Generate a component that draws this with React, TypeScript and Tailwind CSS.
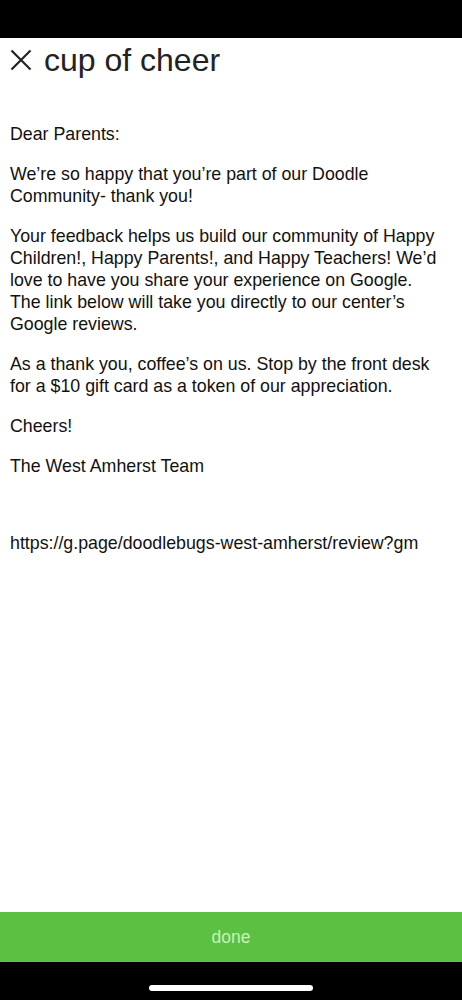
import React from "react";

const paragraphs = [
  "Dear Parents:",
  "We’re so happy that you’re part of our Doodle Community- thank you!",
  "Your feedback helps us build our community of Happy Children!, Happy Parents!, and Happy Teachers! We’d love to have you share your experience on Google. The link below will take you directly to our center’s Google reviews.",
  "As a thank you, coffee’s on us. Stop by the front desk for a $10 gift card as a token of our appreciation.",
  "Cheers!",
  "The West Amherst Team",
];

export default function App() {
  return (
    <div
      className="flex h-[1000px] w-full flex-col bg-white text-[#111]"
      style={{ fontFamily: '"Liberation Sans", Arial, Helvetica, sans-serif' }}
    >
      {/* Status bar */}
      <div className="h-[38px] shrink-0 bg-black" />

      {/* Header */}
      <div className="flex items-center gap-[12px] pl-[10px] pt-[4px]">
        <svg width="22" height="22" viewBox="0 0 22 22" fill="none" stroke="#222" strokeWidth="2.2" strokeLinecap="butt">
          <path d="M1.5 1.5 L20.5 20.5 M20.5 1.5 L1.5 20.5" />
        </svg>
        <h1 className="text-[32px] leading-[36px] text-[#222]">cup of cheer</h1>
      </div>

      {/* Message body */}
      <div className="flex-1 pl-[10px] pr-[15px] pt-[45px] text-[17.8px] leading-[22px]">
        {paragraphs.map((p) => (
          <p key={p} className="mb-[18px]">
            {p}
          </p>
        ))}
        <p className="mt-[55px] whitespace-nowrap">https://g.page/doodlebugs-west-amherst/review?gm</p>
      </div>

      {/* Done button */}
      <button className="h-[50px] w-full shrink-0 bg-[#5cc043] text-[17.5px] font-light text-[#c8f2b8]">
        done
      </button>

      {/* Home indicator area */}
      <div className="flex h-[38px] shrink-0 items-start justify-center bg-black pt-[23px]">
        <div className="h-[6px] w-[164px] rounded-full bg-white" />
      </div>
    </div>
  );
}
